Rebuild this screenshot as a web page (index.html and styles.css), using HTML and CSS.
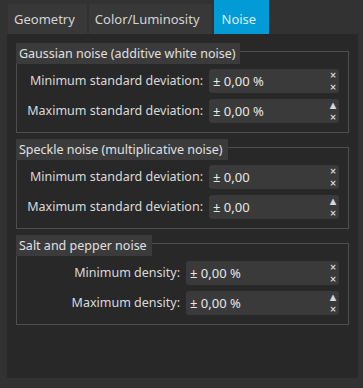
FILE: index.html
```html
<!DOCTYPE html>
<html lang="en">
<head>
    <meta charset="UTF-8">
    <title>Noise settings</title>
    <link rel="stylesheet" href="styles.css">
</head>
<body>

    <!-- Tab bar -->
    <div class="tabs">
        <div class="tab">Geometry</div>
        <div class="tab">Color/Luminosity</div>
        <div class="tab active">Noise</div>
    </div>

    <div class="pane">
        <!-- Gaussian -->
        <div class="group">
            <div class="group-title">Gaussian noise (additive white noise)</div>
            <div class="group-box">
                <div class="label">Minimum standard deviation:</div>
                <div class="spin">± 0,00 %<span class="arrows"><span>×</span><span>×</span></span></div>
                <div class="label">Maximum standard deviation:</div>
                <div class="spin">± 0,00 %<span class="arrows"><span>▲</span><span>×</span></span></div>
            </div>
        </div>

        <!-- Speckle -->
        <div class="group">
            <div class="group-title">Speckle noise (multiplicative noise)</div>
            <div class="group-box">
                <div class="label">Minimum standard deviation:</div>
                <div class="spin">± 0,00<span class="arrows"><span>×</span><span>×</span></span></div>
                <div class="label">Maximum standard deviation:</div>
                <div class="spin">± 0,00<span class="arrows"><span>▲</span><span>×</span></span></div>
            </div>
        </div>

        <!-- Salt and pepper -->
        <div class="group">
            <div class="group-title">Salt and pepper noise</div>
            <div class="group-box wide">
                <div class="label">Minimum density:</div>
                <div class="spin">± 0,00 %<span class="arrows"><span>×</span><span>×</span></span></div>
                <div class="label">Maximum density:</div>
                <div class="spin">± 0,00 %<span class="arrows"><span>▲</span><span>×</span></span></div>
            </div>
        </div>
    </div>

</body>
</html>
```

FILE: styles.css
```css
body, html {
    margin: 0;
    padding: 0;
    height: 100%;
    overflow: hidden;
}

body {
    background-color: #323232;
    font-family: "Noto Sans", sans-serif;
    font-size: 12.5px;
    color: #dadada;
}

/* Tab bar */
.tabs {
    display: flex;
    align-items: flex-end;
    gap: 2px;
    height: 34px;
    padding-left: 8px;
    font-size: 13px;
}

.tab {
    height: 30px;
    line-height: 31px;
    padding: 0 12px 0 6px;
    background-color: #383838;
    color: #d4d4d4;
}

.tab.active {
    height: 34px;
    line-height: 39px;
    padding: 0 13px 0 8px;
    background-color: #039bd6;
    color: #d8eef8;
}

/* Page area */
.pane {
    margin: 0 5px 0 7px;
    height: 344px;
    box-sizing: border-box;
    padding: 9px 9px 0 9px;
    background-color: #282828;
    display: flex;
    flex-direction: column;
    gap: 6px;
}

.group-title {
    position: relative;
    display: inline-block;
    height: 21px;
    line-height: 21px;
    padding: 0 5px 0 3px;
    background-color: #3b3b3b;
    color: #e0e0e0;
    white-space: nowrap;
}

.group-box {
    margin-top: -13px;
    border: 1px solid #4e4e4e;
    padding: 17px 9px 9px 8px;
    display: grid;
    grid-template-columns: auto 130px;
    justify-content: end;
    column-gap: 6px;
    row-gap: 6px;
}

.group-box.wide {
    grid-template-columns: auto 153px;
}

.label {
    text-align: right;
    line-height: 24px;
    white-space: nowrap;
}

.spin {
    position: relative;
    height: 24px;
    line-height: 24px;
    padding-left: 4px;
    border-radius: 3px;
    background-color: #3a3a3a;
    color: #e6e6e6;
    font-size: 13px;
    white-space: nowrap;
}

/* Spin buttons */
.arrows {
    position: absolute;
    right: 2px;
    top: 0;
    width: 8px;
    display: flex;
    flex-direction: column;
    align-items: center;
    font-family: "DejaVu Sans", sans-serif;
    font-size: 8.5px;
    font-weight: bold;
    color: #d8d8d8;
}

.arrows span {
    height: 12px;
    line-height: 12px;
}
```
